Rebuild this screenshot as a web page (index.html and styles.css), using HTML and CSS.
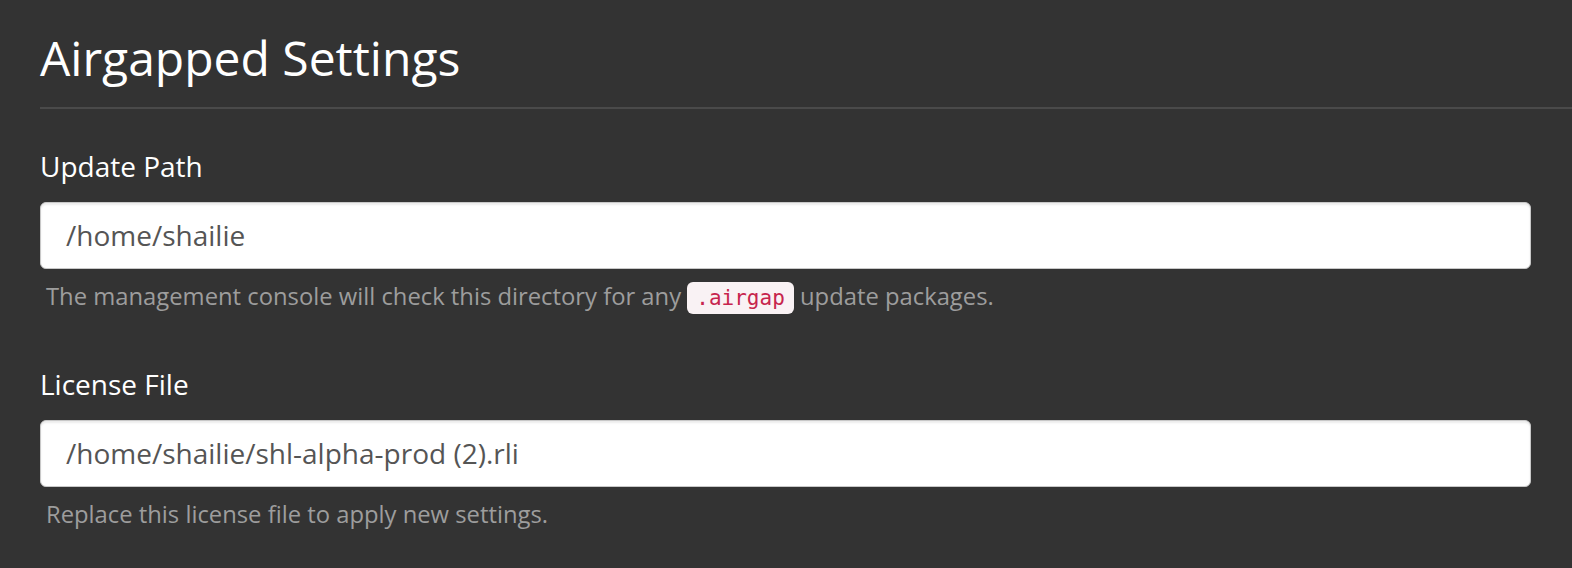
FILE: index.html
```html
<!DOCTYPE html>
<html>
<head>
<meta charset="utf-8">
<link rel="stylesheet" href="styles.css">
</head>
<body>
<div class="page">
  <h1 class="title">Airgapped Settings</h1>
  <div class="rule"></div>
  <div class="field">
    <label class="label">Update Path</label>
    <div class="input">/home/shailie</div>
    <p class="help">The management console will check this directory for any <code class="code">.airgap</code> update packages.</p>
  </div>
  <div class="field field-next">
    <label class="label">License File</label>
    <div class="input">/home/shailie/shl-alpha-prod (2).rli</div>
    <p class="help">Replace this license file to apply new settings.</p>
  </div>
</div>
</body>
</html>
```
FILE: styles.css
```css
html, body {
  margin: 0;
  padding: 0;
  background: #333333;
  font-family: "Open Sans", "Liberation Sans", sans-serif;
}
.page {
  padding: 28px 0 0 40px;
}
.title {
  margin: 0;
  font-size: 48px;
  line-height: 60px;
  font-weight: 400;
  color: #ffffff;
}
.rule {
  height: 2px;
  background: #4a4a4a;
  margin-top: 19px;
}
.field {
  padding-right: 41px;
  margin-top: 39px;
}
.field-next {
  margin-top: 51px;
}
.label {
  display: block;
  font-size: 28px;
  line-height: 36px;
  color: #ffffff;
}
.input {
  margin-top: 18px;
  height: 65px;
  box-sizing: content-box;
  border: 1px solid #c8c8c8;
  border-radius: 6px;
  background: #ffffff;
  box-shadow: inset 0 2px 2px rgba(0,0,0,0.08);
  padding: 0 25px;
  font-size: 28px;
  line-height: 65px;
  color: #555555;
}
.help {
  margin: 10px 0 0 6px;
  font-size: 23.8px;
  line-height: 34px;
  color: #9d9d9d;
}
.code {
  font-family: "DejaVu Sans Mono", "Liberation Mono", monospace;
  font-size: 21px;
  color: #c7254e;
  background: #f9f2f4;
  border-radius: 6px;
  padding: 4px 9px;
}
```
